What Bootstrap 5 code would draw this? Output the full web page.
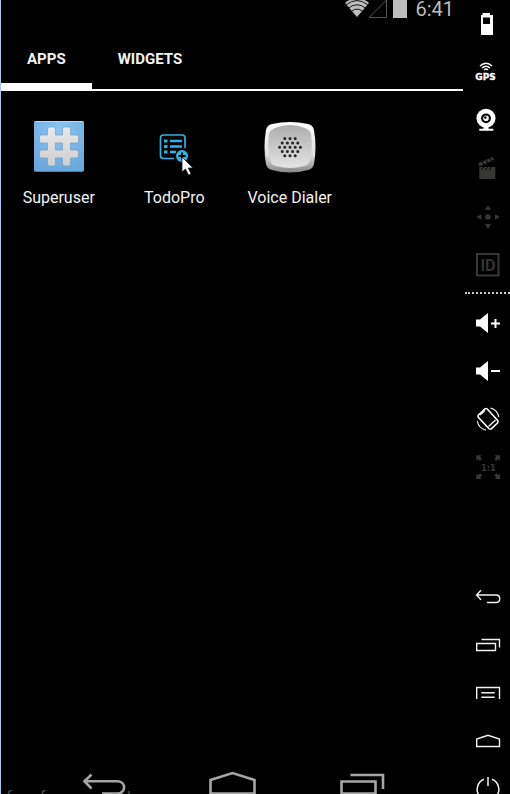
<!DOCTYPE html>
<html lang="en">
<head>
<meta charset="utf-8">
<meta name="viewport" content="width=device-width, initial-scale=1">
<title>Apps</title>
<link href="https://cdn.jsdelivr.net/npm/bootstrap@5.3.0/dist/css/bootstrap.min.css" rel="stylesheet">
<style>
body { background: #000; color: #f2f2f2; font-family: Roboto, "Noto Sans", sans-serif; }
svg { display: block; fill: none; }
button { color: inherit; background: none; border: 0; padding: 0; }
.screen { border-left: 1px solid #a9c8ee; }
.status { height: 20px; color: #bdbdbd; padding-right: 9px; }
.clock { font-size: 20px; line-height: 19px; font-weight: 400; }
.tabs { margin-top: 15px; border-bottom: 2px solid #fff; }
.tab-item { height: 54px; padding: 0 26px 7px; font-size: 15px; font-weight: 700; line-height: 20px; }
.tab-item.active { box-shadow: inset 0 -6px #fff; }
.apps { padding-top: 29px; }
.app-label { font-size: 16px; line-height: 20px; margin-top: 14px; }
.pointer { left: 33px; top: 36px; }
.sysnav { height: 28px; color: #a6a6a6; }
.sysnav button { width: 129px; }
.watermark { left: 5px; top: 21px; font-size: 17px; line-height: 20px; color: #484848; }
.tools { width: 47px; color: #fff; }
.tools svg { margin-left: 1px; }
.tools .off { color: #373735; }
.dots { border-top: 2px dotted #ccc; margin: 4px 0 5px 2px; }
.keys { margin-top: 82px; color: #f0f0f0; }
</style>
</head>
<body>
<div class="d-flex vh-100 overflow-hidden">
  <main class="screen flex-grow-1 d-flex flex-column overflow-hidden">
    <div class="status d-flex justify-content-end">
      <svg width="24" height="18" viewBox="0 0 24 18"><path d="M0 3Q12-7 24 3L12 17Z" fill="currentColor"/><path d="M1 5Q12-4 23 5M3.500 8Q12 1.500 20.500 8M6.500 11.200Q12 7 17.500 11.200" stroke="#000" stroke-width=".9"/></svg>
      <svg width="20" height="18" viewBox="0 0 20 18"><path d="M17.500 0V17.500H0L17.500 0" stroke="#555"/></svg>
      <svg class="ms-1" width="14" height="18" viewBox="0 0 14 18"><path d="M0 0H14V18H0Z" fill="currentColor"/></svg>
      <span class="clock ms-2">6:41</span>
    </div>
    <nav class="tabs d-flex" aria-label="Launcher">
      <button class="tab-item active" type="button">APPS</button>
      <button class="tab-item" type="button">WIDGETS</button>
    </nav>
    <div class="apps row g-0">
      <button class="col-3 d-flex flex-column align-items-center" type="button">
        <svg width="52" height="54" viewBox="0 0 52 54">
          <defs><radialGradient id="blue" cx=".5" cy=".2" r=".8"><stop offset="0" stop-color="#8bc7f5"/><stop offset="1" stop-color="#69a8dc"/></radialGradient>
          <linearGradient id="grey" x2="0" y2="1"><stop offset="0" stop-color="#e9e9e9"/><stop offset="1" stop-color="#cecece"/></linearGradient></defs>
          <rect x="1" y="1" width="50" height="51" rx="2" fill="#4583b5"/><rect x="1" y="1" width="50" height="49" rx="2" fill="#b5dcf8"/><rect x="1" y="2" width="50" height="49" rx="1" fill="url(#blue)"/>
          <path d="M16.500 7h4a2 2 0 0 1 2 2v6h7V9a2 2 0 0 1 2-2h4a2 2 0 0 1 2 2v6h6a2 2 0 0 1 2 2v4a2 2 0 0 1-2 2h-6v7h6a2 2 0 0 1 2 2v4a2 2 0 0 1-2 2h-6v6a2 2 0 0 1-2 2h-4a2 2 0 0 1-2-2v-6h-7v6a2 2 0 0 1-2 2h-4a2 2 0 0 1-2-2v-6H8.500a2 2 0 0 1-2-2v-4a2 2 0 0 1 2-2h6v-7h-6a2 2 0 0 1-2-2v-4a2 2 0 0 1 2-2h6V9a2 2 0 0 1 2-2zM22.500 23v7h7v-7z" fill="url(#grey)" fill-rule="evenodd" stroke="#6f96b6" stroke-width=".6"/>
        </svg>
        <span class="app-label">Superuser</span>
      </button>
      <button class="col-3 d-flex flex-column align-items-center" type="button">
        <span class="position-relative">
          <svg width="52" height="54" viewBox="0 0 52 54"><g stroke="#31b1e2">
            <path d="M26 38.500H15.500a3 3 0 0 1-3-3V18a3 3 0 0 1 3-3H34a3 3 0 0 1 3 3V28" stroke-width="1.700"/>
            <path d="M16 21h3.500M16 26.500h3.500M16 32h3.500" stroke-width="3"/><path d="M22 21h12M22 26.500h12M22 32h6" stroke-width="2.400"/></g>
            <circle cx="34" cy="36" r="6" fill="#31b1e2"/><path d="M30.500 36h7M34 32.500v7" stroke="#000" stroke-width="1.800"/>
          </svg>
          <svg class="pointer position-absolute" width="14" height="20" viewBox="0 0 14 20"><path d="M1 1V16L4.500 13 7.500 19 10 17.800 7.300 12H12Z" fill="#fff" stroke="#16161f" stroke-width=".8"/></svg>
        </span>
        <span class="app-label">TodoPro</span>
      </button>
      <button class="col-3 d-flex flex-column align-items-center" type="button">
        <svg width="52" height="54" viewBox="0 0 52 54">
          <defs><linearGradient id="rim" x2="0" y2="1"><stop offset="0" stop-color="#fff"/><stop offset=".65" stop-color="#dedede"/><stop offset="1" stop-color="#858585"/></linearGradient>
          <linearGradient id="face" x2="0" y2="1"><stop offset="0" stop-color="#adadad"/><stop offset="1" stop-color="#e4e4e4"/></linearGradient></defs>
          <path d="M8 4Q26 0 44 4Q49 5 50 10Q53 27 50 44Q49 49 44 50Q26 55 8 50Q3 49 2 44Q-1 27 2 10Q3 5 8 4Z" fill="url(#rim)"/>
          <path d="M11 8Q26 2 41 8Q46 10 47 14Q49 27 46 40Q45 45 40 46Q26 50 12 46Q7 45 6 40Q3 27 5 14Q6 10 11 8Z" fill="url(#face)"/>
          <g stroke="#252525" stroke-width="3" stroke-linecap="round" stroke-dasharray="0 5.200"><path d="M20.800 18.500H31.500M18.200 23H34M15.600 27.200H36.600M18.200 31.500H34M20.800 35.700H31.500"/></g>
        </svg>
        <span class="app-label">Voice Dialer</span>
      </button>
    </div>
    <div class="sysnav mt-auto d-flex justify-content-center position-relative overflow-hidden">
      <span class="watermark position-absolute text-nowrap">free for personal use</span>
      <button type="button" aria-label="Back"><svg width="129" height="28" viewBox="0 0 129 28" stroke="currentColor" stroke-width="2.600"><path d="M52.500 8.500L45.500 15.300L52.500 22.500M46 15.300H78C87.500 15.300 87.500 27.600 78 27.600H63"/></svg></button>
      <button type="button" aria-label="Home"><svg width="129" height="28" viewBox="0 0 129 28" stroke="currentColor" stroke-width="2.600"><path d="M42.500 27.500V14L64.500 7L86.500 14V27.500Z"/></svg></button>
      <button type="button" aria-label="Recent apps"><svg width="129" height="28" viewBox="0 0 129 28" stroke="currentColor" stroke-width="2.600"><path d="M44.500 15.500H78.500V27.500H44.500ZM53.500 9H86V23"/></svg></button>
    </div>
  </main>

  <aside class="tools flex-shrink-0 d-flex flex-column">
    <button type="button" aria-label="Battery"><svg width="46" height="48" viewBox="0 0 46 48"><path d="M18.500 13H26V15H29V35H17V15H18.500ZM19 17.500V24H26V17.500Z" fill="currentColor" fill-rule="evenodd"/></svg></button>
    <button type="button" aria-label="GPS"><svg width="46" height="48" viewBox="0 0 46 48"><path d="M16 18Q22 12.500 28 18M18 20Q22 16.500 26 20M20 22Q22 20 24 22" stroke="currentColor" stroke-width="1.500"/><text x="21.500" y="32" text-anchor="middle" font-family="DejaVu Sans" font-size="9" font-weight="700" fill="currentColor" stroke="currentColor" stroke-width=".3">GPS</text></svg></button>
    <button type="button" aria-label="Camera"><svg width="46" height="48" viewBox="0 0 46 48"><circle cx="22" cy="22.300" r="9.500" fill="currentColor"/><circle cx="22" cy="22.300" r="4.900" fill="#000"/><circle cx="22" cy="22.300" r="2.800" fill="currentColor"/><circle cx="21.300" cy="21.500" r="1.300" fill="#000"/><path d="M19.500 31h5v1.800h4.800v2H15.300v-2h4.200z" fill="currentColor"/></svg></button>
    <button class="off" type="button" aria-label="Capture"><svg width="46" height="48" viewBox="0 0 46 48"><path d="M15.300 23H31.300V35H15.300ZM14.300 19L28.800 13L30 16L15.500 22.500Z" fill="currentColor"/><path d="M17.500 17l3 4M21.500 15.500l3 4M25.500 14l3 4M19.500 23l-2 3M23.500 23l-2 3M27.500 23l-2 3" stroke="#000" stroke-width="1"/></svg></button>
    <button class="off" type="button" aria-label="Move"><svg width="46" height="48" viewBox="0 0 46 48"><g fill="currentColor"><circle cx="24" cy="25" r="2.800"/><path d="M24 13.500L27 18H21ZM24 37L27 32H21ZM12.300 25L17.300 22.200V27.800ZM36 25L31 22.200V27.800Z"/></g></svg></button>
    <button class="off" type="button" aria-label="Identifiers"><svg width="46" height="48" viewBox="0 0 46 48"><rect x="13" y="14" width="21.500" height="21.500" stroke="currentColor" stroke-width="2"/><text x="24" y="30.500" text-anchor="middle" font-family="Roboto" font-size="16" font-weight="600" fill="currentColor">ID</text></svg></button>
    <div class="dots"></div>
    <button type="button" aria-label="Volume up"><svg width="46" height="48" viewBox="0 0 46 48"><path d="M12 20.500H16L24 14V34L16 27.500H12Z" fill="currentColor"/><path d="M27 24.500H36M31.500 20V29" stroke="currentColor" stroke-width="2"/></svg></button>
    <button type="button" aria-label="Volume down"><svg width="46" height="48" viewBox="0 0 46 48"><path d="M12 20.500H16L24 14V34L16 27.500H12Z" fill="currentColor"/><path d="M27 24H36" stroke="currentColor" stroke-width="2"/></svg></button>
    <button type="button" aria-label="Rotate"><svg width="46" height="48" viewBox="0 0 46 48" stroke="currentColor"><path d="M20.700 14Q22 13 23.200 14L33.700 25.500Q34.500 26.800 33.500 28L27.500 33.700Q26 34.500 24.800 33.500L14.300 22.300Q13.500 21 14.500 20Z" stroke-width="1.600"/><path d="M24.500 31.500l7-6.500M16 20l5-4.500" stroke-width="1.200"/><path d="M26.500 13A11.500 11.500 0 0 1 34.800 22M13.300 26A11.500 11.500 0 0 0 22 35.200" stroke-width="1.100"/></svg></button>
    <button class="off" type="button" aria-label="Actual size"><svg width="46" height="48" viewBox="0 0 46 48"><path d="M12.300 12.300h5.500l-1.800 1.800 2 2-2 2-2-2-1.700 1.700zM36 12.300v5.500l-1.800-1.800-2 2-2-2 2-2-1.700-1.700zM12.300 36v-5.500l1.800 1.800 2-2 2 2-2 2 1.700 1.700zM36 36h-5.500l1.800-1.800-2-2 2-2 2 2 1.700-1.700z" fill="currentColor"/><text x="24.300" y="27.500" text-anchor="middle" font-family="DejaVu Sans" font-size="8" font-weight="700" fill="currentColor">1:1</text></svg></button>
    <div class="keys d-flex flex-column">
      <button type="button" aria-label="Back"><svg width="46" height="48" viewBox="0 0 46 48" stroke="currentColor" stroke-width="1.400"><path d="M17 17.300L12.500 22L17 26.700M13 22H32C37 22 37 29.500 32 29.500H23"/></svg></button>
      <button type="button" aria-label="Recent apps"><svg width="46" height="48" viewBox="0 0 46 48" stroke="currentColor" stroke-width="1.400"><path d="M12.700 22.500H31.500V29.500H12.700ZM17.500 18.500H35.500V26.500"/></svg></button>
      <button type="button" aria-label="Menu"><svg width="46" height="48" viewBox="0 0 46 48" stroke="currentColor" stroke-width="1.400"><path d="M12.700 30V18.500H35.500V30M17.300 23.700H30.700M17.300 28.300H30.700"/></svg></button>
      <button type="button" aria-label="Home"><svg width="46" height="48" viewBox="0 0 46 48" stroke="currentColor" stroke-width="1.400"><path d="M12.700 29.500V22L24 18.300L35.500 22V29.500Z"/></svg></button>
      <button type="button" aria-label="Power"><svg width="46" height="48" viewBox="0 0 46 48" stroke="currentColor" stroke-width="1.500"><path d="M20 14.300A10.800 10.800 0 1 0 28 14.300M24 12V21"/></svg></button>
    </div>
  </aside>
</div>
<script src="https://cdn.jsdelivr.net/npm/bootstrap@5.3.0/dist/js/bootstrap.bundle.min.js"></script>
</body>
</html>
